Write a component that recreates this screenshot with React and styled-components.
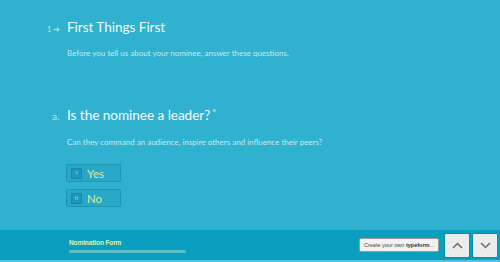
import React from "react";
import styled, { createGlobalStyle } from "styled-components";

const Global = createGlobalStyle`
  html, body { margin: 0; padding: 0; height: 100%; }
  body { font-family: Lato, "Open Sans", sans-serif; background: #2fb1cf; }
  #root { height: 100%; }
`;

const Page = styled.div`
  height: 262px;
  display: flex;
  flex-direction: column;
  background: #2fb1cf;
  overflow: hidden;
`;

const Main = styled.main`
  flex: 1;
  padding: 17px 0 0 47px;
`;

const Section = styled.section`
  margin-bottom: ${(p) => p.$gap || 0}px;
`;

const Heading = styled.div`
  display: flex;
  align-items: baseline;
`;

const Marker = styled.span`
  width: 20px;
  flex: none;
  font-size: ${(p) => p.$size || 8}px;
  color: #cfe6a6;
  white-space: nowrap;
`;

const Title = styled.h1`
  margin: 0;
  font-weight: 400;
  font-size: 13.6px;
  line-height: 20px;
  color: #f4fbfd;
  letter-spacing: -0.05px;
`;

const Star = styled.sup`
  font-size: 9px;
  margin-left: 2px;
  vertical-align: 4px;
`;

const Desc = styled.p`
  margin: ${(p) => p.$top}px 0 0 20px;
  font-size: 8px;
  line-height: 10px;
  color: #c6ecf3;
`;

const Choices = styled.div`
  display: flex;
  flex-direction: column;
  gap: 7px;
  margin: 17px 0 0 19px;
`;

const Choice = styled.div`
  width: 55px;
  height: 18px;
  box-sizing: border-box;
  display: flex;
  align-items: center;
  gap: 5px;
  padding-left: 4px;
  background: rgba(10, 130, 160, 0.18);
  border: 1px solid rgba(10, 120, 150, 0.35);
  border-radius: 2px;
`;

const Key = styled.span`
  width: 9px;
  height: 9px;
  display: flex;
  align-items: center;
  justify-content: center;
  font-size: 5px;
  font-weight: 700;
  color: #7fc8d6;
  background: rgba(10, 120, 150, 0.35);
  border: 1px solid rgba(10, 110, 140, 0.3);
  border-radius: 1px;
`;

const ChoiceLabel = styled.span`
  font-size: 11.5px;
  color: #d6eca4;
`;

const Footer = styled.footer`
  height: 30px;
  flex: none;
  background: #0a9fbe;
  border-bottom: 2px solid #57c4db;
  display: flex;
  align-items: center;
  padding: 0 3px 0 69px;
`;

const Progress = styled.div`
  flex: 1;
  display: flex;
  flex-direction: column;
  gap: 4px;
  padding-top: 1px;
`;

const FormName = styled.div`
  font-family: "Liberation Sans", Arial, sans-serif;
  font-size: 6.5px;
  font-weight: 700;
  color: #e2f2a6;
  letter-spacing: -0.1px;
`;

const Bar = styled.div`
  width: 117px;
  height: 3px;
  background: #5abfc6;
  border-radius: 1px;
`;

const Brand = styled.div`
  width: 80px;
  height: 14px;
  box-sizing: border-box;
  display: flex;
  align-items: center;
  justify-content: center;
  font-family: "Liberation Sans", Arial, sans-serif;
  font-size: 5.5px;
  color: #444;
  background: #f2f2f2;
  border: 1px solid #9a9a9a;
  border-radius: 2px;
  margin-right: 6px;
  white-space: nowrap;
  b { font-weight: 700; color: #333; }
`;

const Nav = styled.div`
  display: flex;
  gap: 4px;
`;

const NavBtn = styled.button`
  width: 24px;
  height: 23px;
  padding: 0;
  display: flex;
  align-items: center;
  justify-content: center;
  background: #ececec;
  border: none;
  border-radius: 1px;
  box-shadow: 0 0 0 1px rgba(0, 60, 80, 0.15);
`;

const Chevron = ({ up }) => (
  <svg width="11" height="7" viewBox="0 0 11 7">
    <path
      d={up ? "M1 6 L5.5 1.5 L10 6" : "M1 1 L5.5 5.5 L10 1"}
      fill="none"
      stroke="#6b6b6b"
      strokeWidth="1.5"
    />
  </svg>
);

export default function App() {
  return (
    <>
      <Global />
      <Page>
        <Main>
          <Section $gap={45}>
            <Heading>
              <Marker $size={7.5}>1 ➜</Marker>
              <Title>First Things First</Title>
            </Heading>
            <Desc $top={11}>
              Before you tell us about your nominee, answer these questions.
            </Desc>
          </Section>
          <Section>
            <Heading>
              <Marker $size={10}>&nbsp;&nbsp;a.</Marker>
              <Title>
                Is the nominee a leader?<Star>*</Star>
              </Title>
            </Heading>
            <Desc $top={12}>
              Can they command an audience, inspire others and influence their peers?
            </Desc>
            <Choices>
              <Choice>
                <Key>Y</Key>
                <ChoiceLabel>Yes</ChoiceLabel>
              </Choice>
              <Choice>
                <Key>N</Key>
                <ChoiceLabel>No</ChoiceLabel>
              </Choice>
            </Choices>
          </Section>
        </Main>
        <Footer>
          <Progress>
            <FormName>Nomination Form</FormName>
            <Bar />
          </Progress>
          <Brand>
            Create your own&nbsp;<b>typeform</b>...
          </Brand>
          <Nav>
            <NavBtn aria-label="previous">
              <Chevron up />
            </NavBtn>
            <NavBtn aria-label="next">
              <Chevron />
            </NavBtn>
          </Nav>
        </Footer>
      </Page>
    </>
  );
}
